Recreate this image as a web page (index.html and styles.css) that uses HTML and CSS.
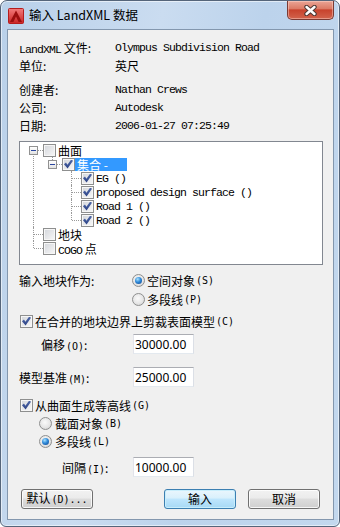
FILE: index.html
```html
<!DOCTYPE html>
<html lang="zh-CN">
  <head>
    <meta charset="UTF-8" />
    <title>输入 LandXML 数据</title>
    <link rel="stylesheet" href="styles.css">
  </head>
  <body>
    <div class="window">
      <div class="titlebar">
        <svg class="app-icon" width="16" height="16" viewBox="0 0 16 16">
          <defs>
            <linearGradient id="ig" x1="0" y1="0" x2="0" y2="1">
              <stop offset="0" stop-color="#f27b7b" />
              <stop offset="1" stop-color="#c92323" />
            </linearGradient>
          </defs>
          <rect x="0.5" y="0.5" width="15" height="15" rx="1" fill="url(#ig)" stroke="#b51c1c" />
          <path d="M8 2.5 L14 14 H10.6 L8 8.6 L5.4 14 H2 Z" fill="#9a0f0f" />
        </svg>
        <span class="title">输入 LandXML 数据</span>
        <div class="close">
          <svg width="13" height="11" viewBox="0 0 13 11">
            <path d="M2.5 2 L10.5 9 M10.5 2 L2.5 9" stroke="#4b3733" stroke-width="4.4" stroke-linecap="round" />
            <path d="M2.5 2 L10.5 9 M10.5 2 L2.5 9" stroke="#fff" stroke-width="2.4" stroke-linecap="round" />
          </svg>
        </div>
      </div>

      <div class="client">
        <div class="info">
          <div class="row"><span><span class="m">LandXML</span> 文件:</span><span class="m">Olympus Subdivision Road</span></div>
          <div class="row"><span>单位:</span><span>英尺</span></div>
          <div class="row gap"><span>创建者:</span><span class="m">Nathan Crews</span></div>
          <div class="row"><span>公司:</span><span class="m">Autodesk</span></div>
          <div class="row"><span>日期:</span><span class="m">2006-01-27 07:25:49</span></div>
        </div>

        <ul class="tree">
          <li>
            <span class="exp"></span>
            <div class="node"><span class="cb"></span><span class="tx">曲面</span></div>
            <ul>
              <li>
                <span class="exp"></span>
                <div class="node"><span class="cb on"></span><span class="tx sel">集合 -</span></div>
                <ul>
                  <li><div class="node"><span class="cb on"></span><span class="tx m">EG ()</span></div></li>
                  <li><div class="node"><span class="cb on"></span><span class="tx m">proposed design surface ()</span></div></li>
                  <li><div class="node"><span class="cb on"></span><span class="tx m">Road 1 ()</span></div></li>
                  <li><div class="node"><span class="cb on"></span><span class="tx m">Road 2 ()</span></div></li>
                </ul>
              </li>
            </ul>
          </li>
          <li><div class="node"><span class="cb"></span><span class="tx">地块</span></div></li>
          <li><div class="node"><span class="cb"></span><span class="tx"><span class="m">COGO</span> 点</span></div></li>
        </ul>

        <div class="opt">
          <span class="olbl">输入地块作为:</span>
          <div class="radios">
            <div class="item"><span class="rb on"></span>空间对象<span class="k">(S)</span></div>
            <div class="item"><span class="rb"></span>多段线<span class="k">(P)</span></div>
          </div>
        </div>

        <div class="item chk first"><span class="cb on"></span>在合并的地块边界上剪裁表面模型<span class="k">(C)</span></div>
        <div class="field offset"><span class="flbl">偏移<span class="k">(O)</span>:</span><input class="num" type="text" value="30000.00"></div>
        <div class="field base"><span class="flbl">模型基准<span class="k">(M)</span>:</span><input class="num" type="text" value="25000.00"></div>

        <div class="item chk second"><span class="cb on"></span>从曲面生成等高线<span class="k">(G)</span></div>
        <div class="radios sub">
          <div class="item small"><span class="rb"></span>截面对象<span class="k">(B)</span></div>
          <div class="item small"><span class="rb on"></span>多段线<span class="k">(L)</span></div>
        </div>
        <div class="field interval"><span class="flbl">间隔<span class="k">(I)</span>:</span><input class="num" type="text" value="10000.00"></div>

        <div class="buttons">
          <button class="btn">默认<span class="k">(D)...</span></button>
          <button class="btn def">输入</button>
          <button class="btn">取消</button>
        </div>
      </div>
    </div>
  </body>
</html>
```

FILE: styles.css
```css
* {
  margin: 0;
  padding: 0;
  box-sizing: border-box;
}
body {
  background: #fff;
  font-family: "Noto Sans CJK SC", sans-serif;
  font-size: 12px;
  color: #000;
}
button,
input {
  font: inherit;
  color: inherit;
}

/* window frame */
.window {
  width: 340px;
  height: 527px;
  display: flex;
  flex-direction: column;
  border: 1px solid #55657a;
  border-radius: 7px 7px 6px 6px;
  background: linear-gradient(100deg, #b9d0e9 0%, #cadcf0 38%, #bcd3ec 62%, #c3d8ee 100%);
  box-shadow: inset 0 0 0 1px rgba(255, 255, 255, 0.55);
}
.titlebar {
  height: 28px;
  display: flex;
  align-items: flex-start;
}
.app-icon {
  margin: 7px 0 0 7px;
}
.title {
  margin: 5px 0 0 5px;
  line-height: 17px;
  font-size: 12.5px;
}
.close {
  margin-left: auto;
  margin-right: 5px;
  width: 47px;
  height: 19px;
  display: flex;
  align-items: center;
  justify-content: center;
  border: 1px solid #7a3a33;
  border-top: none;
  border-radius: 0 0 5px 5px;
  background: linear-gradient(#eaa596 0%, #dc7b66 42%, #c8432d 50%, #d2634c 100%);
  box-shadow: inset 0 0 0 1px rgba(255, 220, 210, 0.45);
}

/* dialog body */
.client {
  flex: 1;
  margin: 0 5px 6px 6px;
  border: 1px solid #8397ae;
  background: #f0f0f0;
  padding: 9px 10px 0 11px;
}
.m {
  font-family: "Liberation Mono", monospace;
  font-size: 11.5px;
  letter-spacing: -0.9px;
}
.k {
  font-family: "DejaVu Sans Mono", monospace;
  font-size: 10px;
  margin-left: 1px;
}

.row {
  display: grid;
  grid-template-columns: 96px 1fr;
  height: 18px;
  line-height: 18px;
}
.row.gap {
  margin-top: 6px;
}

/* tree */
.tree,
.tree ul {
  list-style: none;
}
.tree {
  margin-top: 6px;
  height: 124px;
  border: 1px solid #828790;
  background: #fff;
  padding: 1px 0 0 4px;
}
.tree li {
  position: relative;
  padding-left: 19px;
}
.tree li::before {
  content: "";
  position: absolute;
  left: 9px;
  top: 0;
  bottom: 0;
  border-left: 1px dotted #999;
}
.tree li::after {
  content: "";
  position: absolute;
  left: 10px;
  top: 7px;
  width: 9px;
  border-top: 1px dotted #999;
}
.tree li:last-child::before {
  bottom: auto;
  height: 7px;
}
.tree > li:first-child::before {
  top: 7px;
}
.exp {
  position: absolute;
  left: 5px;
  top: 3px;
  width: 9px;
  height: 9px;
  border: 1px solid #919191;
  background: linear-gradient(#fff, #e2e2e2);
  z-index: 1;
}
.exp::after {
  content: "";
  position: absolute;
  left: 1px;
  top: 3px;
  width: 5px;
  height: 1px;
  background: #2b47a0;
}
.node {
  display: flex;
  align-items: center;
  height: 14px;
}
.tx {
  height: 13px;
  line-height: 13px;
  padding: 0 2px;
  white-space: pre;
}
.tx.sel {
  width: 52px;
  background: #3399ff;
  color: #fff;
}

/* check boxes and radios */
.cb,
.rb {
  position: relative;
  flex: none;
  width: 13px;
  height: 13px;
  border: 1px solid #8e8f8f;
}
.cb {
  background: linear-gradient(135deg, #d3d6db, #f8f8f8);
  box-shadow: inset 0 0 0 1px #f6f6f6;
}
.cb.on::after {
  content: "";
  position: absolute;
  left: 1px;
  top: 1px;
  width: 9px;
  height: 9px;
  background: linear-gradient(#4d67a8, #2c4285);
  clip-path: polygon(0 52%, 22% 34%, 38% 58%, 80% 0, 100% 14%, 40% 100%);
}
.rb {
  border-radius: 50%;
  background: radial-gradient(circle at 45% 40%, #fafafa 0, #e6e6e6 55%, #cacaca 100%);
}
.rb.on::after {
  content: "";
  position: absolute;
  left: 2px;
  top: 2px;
  width: 7px;
  height: 7px;
  border-radius: 50%;
  background: radial-gradient(circle at 38% 32%, #a9e2ff 0, #2f8ad9 45%, #0e3f88 100%);
}

.item {
  display: flex;
  align-items: center;
  height: 19px;
}
.item .cb,
.item .rb {
  margin-right: 2px;
}
.item.small {
  height: 18px;
}
.item.small .rb {
  margin-right: 3px;
}

.opt {
  display: flex;
  margin-top: 6px;
}
.olbl {
  width: 113px;
  line-height: 19px;
}
.chk {
  height: 18px;
  padding-left: 1px;
}
.chk.first {
  margin-top: 3px;
}
.chk.second {
  margin-top: 9px;
}
.radios.sub {
  padding-left: 20px;
}

.field {
  display: flex;
  align-items: center;
  height: 20px;
}
.flbl {
  width: 114px;
}
.field.offset {
  margin-top: 4px;
}
.field.offset .flbl {
  padding-left: 22px;
}
.field.base {
  margin-top: 13px;
}
.field.interval {
  margin-top: 7px;
}
.field.interval .flbl {
  padding-left: 43px;
}
.num {
  width: 61px;
  height: 20px;
  border: 1px solid;
  border-color: #abadb3 #dbdfe6 #e3e9ef #e2e3ea;
  background: #fff;
  padding-left: 1px;
  font-family: "Noto Sans", sans-serif;
  font-size: 12px;
  outline: none;
}

/* buttons */
.buttons {
  display: flex;
  margin-top: 12px;
  padding: 0 3px 0 2px;
}
.btn {
  width: 72px;
  height: 20px;
  border: 1px solid #707070;
  border-radius: 3px;
  background: linear-gradient(#f2f2f2, #ebebeb 45%, #dddddd 50%, #cfcfcf);
  box-shadow: inset 0 0 0 1px rgba(255, 255, 255, 0.8);
  line-height: 16px;
}
.btn.def {
  margin-left: auto;
  margin-right: 12px;
  border-color: #3c7fb1;
  background: linear-gradient(#eaf6fd, #d9f0fc 45%, #bee6fd 50%, #a7d9f5);
  box-shadow: inset 0 0 0 1px #c8eefc;
}
```
